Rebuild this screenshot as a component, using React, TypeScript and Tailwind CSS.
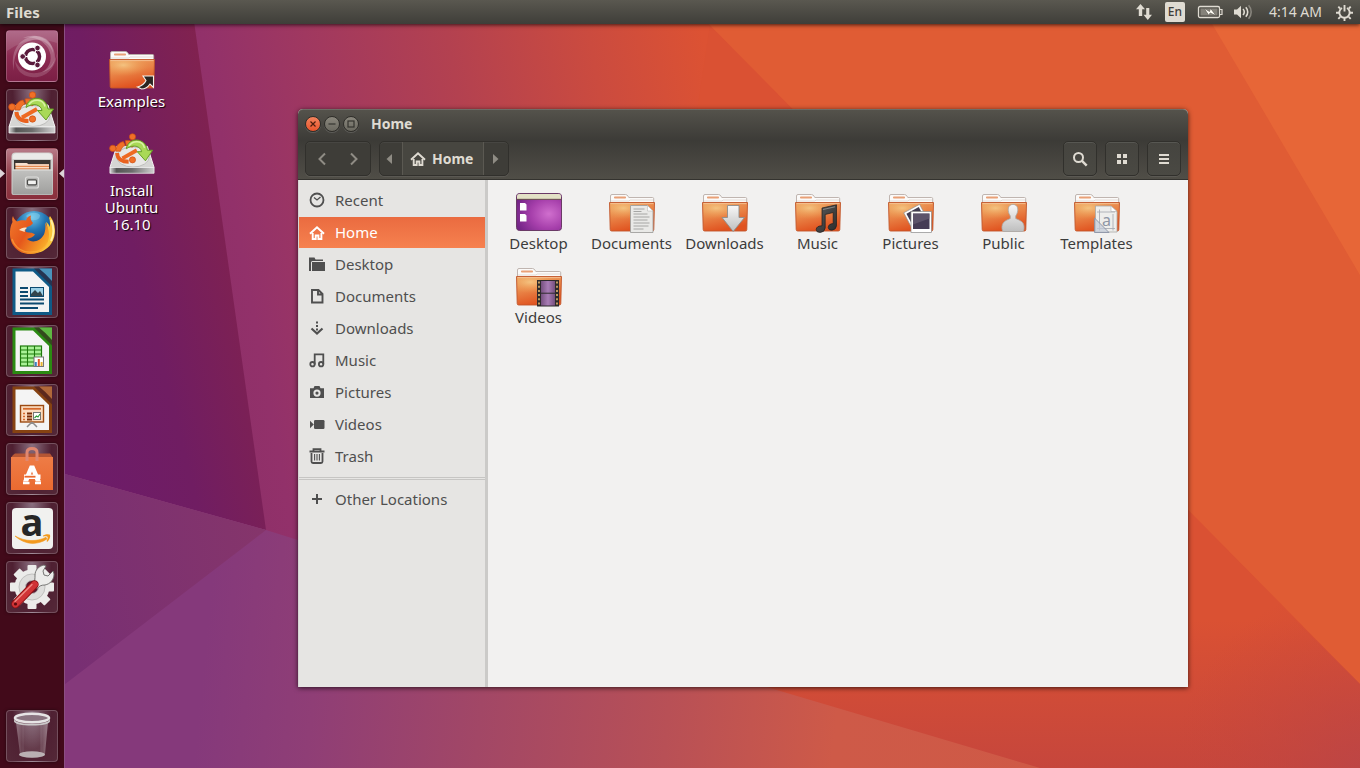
import React from "react";

/* Shared gradients and wallpaper ------------------------------------------------ */

function Wallpaper() {
  return (
    <svg
      className="absolute inset-0 h-full w-full"
      viewBox="0 0 1360 768"
      preserveAspectRatio="none"
      aria-hidden="true"
    >
      <defs>
        <linearGradient id="sky" gradientUnits="userSpaceOnUse" x1="150" y1="120" x2="700" y2="20">
          <stop offset="0" stopColor="#8c2f68" />
          <stop offset="0.12" stopColor="#92316a" />
          <stop offset="0.3" stopColor="#a03860" />
          <stop offset="0.55" stopColor="#b34150" />
          <stop offset="0.8" stopColor="#cb4b3f" />
          <stop offset="1" stopColor="#dc5233" />
        </linearGradient>
        <linearGradient id="skyDark" gradientUnits="userSpaceOnUse" x1="65" y1="360" x2="266" y2="310">
          <stop offset="0" stopColor="#6d1c69" />
          <stop offset="0.45" stopColor="#701d62" />
          <stop offset="1" stopColor="#81224f" />
        </linearGradient>
        <linearGradient id="ground" gradientUnits="userSpaceOnUse" x1="200" y1="700" x2="1130" y2="790">
          <stop offset="0" stopColor="#85397b" />
          <stop offset="0.12" stopColor="#8f3e76" />
          <stop offset="0.3" stopColor="#a24766" />
          <stop offset="0.5" stopColor="#b85056" />
          <stop offset="0.68" stopColor="#ce5a48" />
          <stop offset="1" stopColor="#cf5945" />
        </linearGradient>
        <linearGradient id="groundLeft" gradientUnits="userSpaceOnUse" x1="65" y1="600" x2="266" y2="560">
          <stop offset="0" stopColor="#782f73" />
          <stop offset="1" stopColor="#85356b" />
        </linearGradient>
        <linearGradient id="dusk" x1="0" y1="0" x2="0" y2="1">
          <stop offset="0" stopColor="#c6463c" stopOpacity="0" />
          <stop offset="1" stopColor="#c6463c" />
        </linearGradient>
        <radialGradient id="duskCorner" gradientUnits="userSpaceOnUse" cx="1370" cy="780" r="200">
          <stop offset="0" stopColor="#bb4547" stopOpacity="0.9" />
          <stop offset="1" stopColor="#c6463c" stopOpacity="0" />
        </radialGradient>
        <linearGradient id="folderFront" x1="0" y1="0" x2="0.35" y2="1">
          <stop offset="0" stopColor="#eda361" />
          <stop offset="0.5" stopColor="#e98447" />
          <stop offset="1" stopColor="#e0521f" />
        </linearGradient>
        <radialGradient id="folderGlow" cx="0.3" cy="0.25" r="0.6">
          <stop offset="0" stopColor="#f6cf8c" stopOpacity="0.8" />
          <stop offset="1" stopColor="#f0a050" stopOpacity="0" />
        </radialGradient>
        <radialGradient id="desk" cx="0.72" cy="0.55" r="0.8">
          <stop offset="0" stopColor="#d06fce" />
          <stop offset="0.5" stopColor="#a63fab" />
          <stop offset="1" stopColor="#6f2283" />
        </radialGradient>
        <linearGradient id="silver" x1="0" y1="0" x2="0" y2="1">
          <stop offset="0" stopColor="#f8f8f8" />
          <stop offset="1" stopColor="#bebebe" />
        </linearGradient>
        <linearGradient id="cabinet" x1="0" y1="0" x2="0" y2="1">
          <stop offset="0" stopColor="#c2c2c0" />
          <stop offset="1" stopColor="#9f9f9d" />
        </linearGradient>
        <linearGradient id="ink" x1="0" y1="0" x2="1" y2="1">
          <stop offset="0" stopColor="#5a5a5a" />
          <stop offset="1" stopColor="#2c2c2c" />
        </linearGradient>
        <linearGradient id="edge" x1="0" y1="0" x2="1" y2="0">
          <stop offset="0" stopColor="#d8d8d8" />
          <stop offset="0.15" stopColor="#555555" />
          <stop offset="0.5" stopColor="#6c6c6c" />
          <stop offset="1" stopColor="#d0d0d0" />
        </linearGradient>
        <linearGradient id="film" x1="0" y1="0" x2="1" y2="0">
          <stop offset="0" stopColor="#76507f" />
          <stop offset="0.5" stopColor="#a97db6" />
          <stop offset="1" stopColor="#76507f" />
        </linearGradient>
        <radialGradient id="globe" cx="0.45" cy="0.15" r="0.8">
          <stop offset="0" stopColor="#6cc4ea" />
          <stop offset="0.4" stopColor="#2377b4" />
          <stop offset="0.8" stopColor="#143f7c" />
        </radialGradient>
        <linearGradient id="fox" x1="0" y1="0" x2="1" y2="0.6">
          <stop offset="0" stopColor="#f07a2c" />
          <stop offset="0.5" stopColor="#e5571c" />
          <stop offset="1" stopColor="#f7a928" />
        </linearGradient>
        <linearGradient id="cup" x1="0" y1="0" x2="1" y2="0">
          <stop offset="0" stopColor="#ffffff" stopOpacity="0.35" />
          <stop offset="0.2" stopColor="#ffffff" stopOpacity="0.12" />
          <stop offset="0.75" stopColor="#ffffff" stopOpacity="0.12" />
          <stop offset="1" stopColor="#ffffff" stopOpacity="0.4" />
        </linearGradient>
        <linearGradient id="tote" x1="0" y1="0" x2="0" y2="1">
          <stop offset="0" stopColor="#ee7c46" />
          <stop offset="1" stopColor="#ea6a30" />
        </linearGradient>
      </defs>
      <rect width="1360" height="768" fill="url(#sky)" />
      <path d="M710 24 600 768H1360V24Z" fill="#da5133" />
      <path d="M685 0 1360 684V0Z" fill="#e05c34" />
      <path d="M1198 0 1360 275V0Z" fill="#e76637" />
      <path d="M680 620H1296L1360 684V768H680Z" fill="url(#dusk)" />
      <path d="M1100 560H1236L1360 684V768H1100Z" fill="url(#duskCorner)" />
      <path d="M0 0H191L266 530 0 456Z" fill="url(#skyDark)" />
      <path d="M0 456 266 530 770 688 1040 768H0Z" fill="url(#ground)" />
      <path d="M0 456 266 530 0 734Z" fill="url(#groundLeft)" />
    </svg>
  );
}

/* Top panel --------------------------------------------------------------------- */

function TopPanel() {
  return (
    <header className="relative z-20 flex h-6 items-center justify-between bg-linear-to-b from-[#5a5850] to-[#3f3e39] pr-[7px] pl-1.5 text-[#dfdbd2] shadow-[0_1px_4px_rgba(0,0,0,0.7)]">
      <span className="text-[15px] leading-[22px] font-bold">Files</span>
      <div className="flex items-center">
        <button type="button" aria-label="Network" className="mr-3">
          <svg width="18" height="18" viewBox="0 0 18 18" className="block" fill="#dfdbd2">
            <path d="M5.500 1 10 6.200H7.200V13H3.800V6.200H1Z" />
            <path d="M12.800 17 17 11.800H14.300V5H11.200V11.800H8.500Z" />
          </svg>
        </button>
        <button
          type="button"
          className="mr-3 h-5 w-5 rounded-[2px] bg-[#dfdbd2] text-center text-xs leading-5 font-medium text-[#3f3e39]"
        >
          En
        </button>
        <button type="button" aria-label="Battery" className="mr-2.5">
          <svg width="26" height="16" viewBox="0 0 26 16" className="block">
            <rect x="1.500" y="2.500" width="21" height="11" rx="1.500" fill="none" stroke="#dfdbd2" strokeWidth="1.300" />
            <rect x="3.500" y="4.500" width="17" height="7" fill="#85827a" />
            <path d="M23 5.500h2v5h-2" fill="none" stroke="#dfdbd2" strokeWidth="1.200" />
            <path d="M7 4.300 12.500 7.500 13.600 4.400 19 11.600 13 8.900 12 11.600Z" fill="#fffdf5" stroke="#55534c" strokeWidth="0.600" />
          </svg>
        </button>
        <button type="button" aria-label="Sound" className="mr-4">
          <svg width="20" height="16" viewBox="0 0 20 16" className="block">
            <path d="M1 5.500h3l4-3.800v12.600l-4-3.800H1Z" fill="#dfdbd2" />
            <path d="M10 5a4.200 4.200 0 0 1 0 6" fill="none" stroke="#dfdbd2" strokeWidth="1.600" />
            <path d="M12.800 3.200a7 7 0 0 1 0 9.600" fill="none" stroke="#dfdbd2" strokeWidth="1.600" />
            <path d="M15.600 1.300a10 10 0 0 1 0 13.400" fill="none" stroke="#89867e" strokeWidth="1.600" />
          </svg>
        </button>
        <button type="button" className="mr-3.5 text-sm leading-[22px]">
          4:14 AM
        </button>
        <button type="button" aria-label="Session">
          <svg width="17" height="17" viewBox="0 0 17 17" className="block" fill="none" stroke="#dfdbd2">
            <path d="M6 4A5.200 5.200 0 1 0 11 4" strokeWidth="1.900" />
            <path d="M8.500 1v6.500" strokeWidth="1.900" />
            <path
              d="M0 8.700h3M14 8.700h3M8.500 14v3M2.300 2.700l1.800 1.800M14.700 2.700l-1.800 1.800M2.300 14.900l2-2M14.700 14.900l-2-2"
              strokeWidth="1.900"
            />
          </svg>
        </button>
      </div>
    </header>
  );
}

/* Launcher artwork -------------------------------------------------------------- */

function UbuntuArt() {
  return (
    <svg width="50" height="50" viewBox="0 0 50 50" className="block">
      <g fill="#ffffff">
        <path d="M7 40C3 22 10 8 27 5c11-1 19 6 19 17C43 12 35 8 26 9 12 12 6 24 7 40Z" fillOpacity="0.22" />
        <path d="M16 7C32 0 49 11 48 28c-1 7-6 12-13 13C44 36 46 26 41 17 35 8 26 5 16 7Z" fillOpacity="0.24" />
        <path d="M50 22C49 38 38 48 24 46 14 45 9 38 8 30c5 9 13 13 22 12 10-1 17-8 20-20Z" fillOpacity="0.16" />
        <path d="M0 2Q0 0 2 0H48q2 0 2 2V12Q25 2 0 20Z" fillOpacity="0.12" />
      </g>
      <circle cx="25" cy="25.500" r="14" fill="#ffffff" />
      <circle cx="25.500" cy="25.500" r="7" fill="none" stroke="#5a1a3c" strokeWidth="3.600" />
      <path
        d="M25.500 25.500H14M25.500 25.500l5.700-10M25.500 25.500l5.700 10"
        stroke="#ffffff"
        strokeWidth="1.200"
      />
      <circle cx="25.500" cy="25.500" r="5" fill="#ffffff" />
      <g fill="#5a1a3c" stroke="#ffffff" strokeWidth="0.900">
        <circle cx="15.700" cy="25.500" r="2.800" />
        <circle cx="30.500" cy="17" r="2.800" />
        <circle cx="30.500" cy="34" r="2.800" />
      </g>
    </svg>
  );
}

function InstallArt({ size = 50 }: { size?: number }) {
  return (
    <svg width={size} height={size} viewBox="0 0 50 50" className="block">
      <path d="M9 15 41 15 48 37H2Z" fill="#d6d6d4" stroke="#f6f6f6" />
      <ellipse cx="26" cy="26" rx="17" ry="10.500" fill="#e8e8e6" stroke="#bdbdbb" />
      <path d="M2 37h46v6H2Z" fill="url(#edge)" stroke="#eeeeee" strokeWidth="0.800" />
      <path d="M9.500 22c0 6 5 9 12 9" stroke="#e9621f" strokeWidth="4" fill="none" />
      <path d="M8 20c0-5 3-9 8-10l2 4c-3 1-4 3-5 6Z" fill="#f07027" stroke="#cc4d12" strokeWidth="0.700" />
      <path d="M18 9c5-1 9 1 11 4l-4 3c-2-2-4-2-6-2Z" fill="#f07027" stroke="#cc4d12" strokeWidth="0.700" />
      <path d="M15 27.500 30 19" stroke="#ee6a22" strokeWidth="4" />
      <g fill="#f07027" stroke="#cc4d12" strokeWidth="0.700">
        <circle cx="5" cy="17" r="3.300" />
        <circle cx="25.500" cy="5" r="3.200" />
        <circle cx="25.500" cy="29" r="3.200" />
      </g>
      <path
        d="M19 17.500C21 5 39 5 41 19h5.500L39 30 30.500 20.500H35c-1-6-9-8-16-3Z"
        fill="#a9d957"
        stroke="#629b22"
        strokeWidth="1"
      />
      <path d="M22 14.500c4-6 14-6 16 2" stroke="#d9f3a4" strokeWidth="1.500" fill="none" />
    </svg>
  );
}

function FilesArt() {
  return (
    <svg width="50" height="50" viewBox="0 0 50 50" className="block">
      <path d="M4.500 7.500q0-4 4-4H42q4 0 4 4V44q0 2-2 2H6.500q-2 0-2-2Z" fill="#cfcfcd" />
      <path d="M5.500 7q1-2.800 4-2.800h31.500q3 0 4 2.800V10H5.500Z" fill="#eaeae8" />
      <path d="M7 11h36.500v10H7Z" fill="#3a3633" />
      <path d="M8.500 14h11l2 1.200h20.500V21H8.500Z" fill="#e28a52" />
      <path d="M8.500 14h11l2 1.200h20.500v1.500H8.500Z" fill="#f7e1cf" />
      <path d="M8.500 18.600h33.500" stroke="#fbdcc2" strokeWidth="1.200" />
      <path d="M5.500 20.500h40V44q0 1.500-1.500 1.500H7q-1.500 0-1.500-1.500Z" fill="url(#cabinet)" />
      <path d="M5.500 21h40" stroke="#e2e2e0" />
      <rect x="18.500" y="28" width="13" height="11" rx="2" fill="#b4b4b2" stroke="#dededc" strokeWidth="1.200" />
      <rect x="20.500" y="30.800" width="9" height="5" rx="1" fill="#f2f2f0" stroke="#4a4a48" strokeWidth="1.200" />
    </svg>
  );
}

function FirefoxArt() {
  return (
    <svg width="50" height="50" viewBox="0 0 50 50" className="block">
      <circle cx="27" cy="23.500" r="20.500" fill="url(#globe)" />
      <path d="M19 8c4-4 11-4 14-1 0 3-2 5-6 5-3 1-6-2-8-4Z" fill="#8ed6f2" fillOpacity="0.45" />
      <path
        d="M43 8c6 7 7 20 1 28-5 7-13 10-20 9-3 0-5-1-7-2 10 1 18-4 21-11 3-6 3-13 1-18 2 1 3 3 4 5 0-4 0-7-1-9Z"
        fill="#f9c43a"
      />
      <path
        d="M6 8c1 3 2 4 4 5.500 3-1.500 6-1.500 9-1 1-3 2-4 5-5-1 3 0 5 2 7.500-1 2-3 3-6 4-2 2-2 4-1 5 3 1 6 0 9 2.500-2 3-5 3.500-8 4.500 5 4.500 13 2.500 17-4.500 1-3 2-7 1-12 4 6 5 12 3 19-3 8-10 12.500-17 12.500C11 46.500 3 37 3 26c0-6 1-9 2.500-12C5 12 5 10 6 8Z"
        fill="url(#fox)"
      />
      <path d="M12 22c2-2 6-3 8-2-2 1-3 3-2 4Z" fill="#fbe3c4" />
      <path d="M5 31c3 9 11 14 20 13 7 0 13-4 16-10" fill="none" stroke="#ffb13d" strokeWidth="1.400" strokeOpacity="0.6" />
      <path d="M44 12c3 7 3 15 0 21" fill="none" stroke="#fff0a0" strokeWidth="2" />
    </svg>
  );
}

function OfficeArt({
  body,
  corner,
  children,
}: {
  body: string;
  corner: string;
  children: React.ReactNode;
}) {
  return (
    <svg width="50" height="50" viewBox="0 0 50 50" className="block">
      <path d="M5.500 1.500H45V48H5.500Z" fill={body} />
      <path d="M27 1.500H45V19.500Z" fill="#3a1626" fillOpacity="0.55" />
      <path d="M32 1.500H45V14Q39 7 32 1.500Z" fill={corner} />
      <path d="M8.500 4.500h17.500l16 15.500v25H8.500Z" fill="#f4f4f4" />
      {children}
    </svg>
  );
}

function WriterArt() {
  return (
    <OfficeArt body="#0f5a86" corner="#4a93bb">
      <path
        d="M13 21h8M13 25h8M13 29h8M13 32.500h24M13 36.500h24M13 41h18"
        stroke="#0c4a70"
        strokeWidth="2"
      />
      <rect x="23.500" y="20.500" width="13" height="9" fill="#9cd0e6" stroke="#0c4a70" />
      <path d="M24 29v-2l4-4 3 3 2-2 3 5Z" fill="#33444c" />
    </OfficeArt>
  );
}

function CalcArt() {
  return (
    <OfficeArt body="#2b8a12" corner="#5fb843">
      <rect x="13.500" y="20" width="21" height="20" fill="#a9f296" stroke="#1e7a0c" strokeWidth="1.200" />
      <path
        d="M13 24h22M13 28h22M13 32h22M13 36h22M20.500 20v20M27.500 20v20"
        stroke="#1e7a0c"
        strokeWidth="1.100"
      />
      <rect x="27" y="31" width="9.500" height="9.500" fill="#ffffff" stroke="#777777" />
      <path d="M28.800 36v4" stroke="#3c82c4" strokeWidth="2" />
      <path d="M31.800 33v7" stroke="#e2562a" strokeWidth="2" />
      <path d="M34.600 36v4" stroke="#e8b32f" strokeWidth="2" />
    </OfficeArt>
  );
}

function ImpressArt() {
  return (
    <OfficeArt body="#864212" corner="#b0683a">
      <rect x="13.500" y="20.500" width="23" height="16.500" fill="#fbdcc0" stroke="#9c4a12" strokeWidth="1.400" />
      <path d="M16 23.800h18" stroke="#d5692b" strokeWidth="1.800" />
      <path d="M16 28.500h2M16 31.500h2M16 34.500h2" stroke="#d5692b" strokeWidth="1.600" />
      <path d="M20 28.500h5M20 31.500h5M20 34.500h5" stroke="#7a2f08" strokeWidth="1.800" />
      <rect x="26.500" y="27.500" width="7" height="7" fill="#ffffff" stroke="#777777" />
      <path d="m27.500 33 2-2 1.500 1 2-3" stroke="#2d9b38" strokeWidth="1.100" fill="none" />
      <path d="M25 37v2M20 42l4-4h2l4 4" stroke="#8c8c8c" strokeWidth="1.500" fill="none" />
    </OfficeArt>
  );
}

function SoftwareArt() {
  return (
    <svg width="50" height="50" viewBox="0 0 50 50" className="block">
      <path d="M6 11 8 9.500H43l2.500 3.500h-41Z" fill="#b55634" />
      <path d="M4 13h42v33H4Z" fill="url(#tote)" />
      <path d="M20 17V8.500q0-4 5-4t5 4V17" fill="none" stroke="#df8770" strokeWidth="3" />
      <path d="M22.800 21.500h4.400L34 37.500h-5.200L25 27.500l-3.800 10H16Z" fill="#ffffff" />
      <path d="M17 30.500h16.500v4.500H17Z" fill="#ffffff" />
      <path d="M17.500 32.700h11" stroke="#ea6a30" strokeWidth="1.800" />
      <path d="M16 39h6.500M28 39h6" stroke="#ffffff" strokeWidth="2.400" />
    </svg>
  );
}

function AmazonArt() {
  return (
    <svg width="50" height="50" viewBox="0 0 50 50" className="block overflow-visible">
      <rect x="5" y="5" width="41" height="41" rx="4" fill="#f1f1ef" />
      <text
        x="25"
        y="33"
        textAnchor="middle"
        fontFamily="Open Sans, sans-serif"
        fontWeight="700"
        fontSize="38"
        fill="#262626"
      >
        a
      </text>
      <path d="M8 33c10 9 22 9.500 32 3l-1-1.700c-9 4.500-21 4.500-31-1.300Z" fill="#f39a1e" stroke="#f39a1e" strokeWidth="0.600" />
      <path d="M36 32.500c3-1.500 6-1.500 7-.7.600 2-.4 5-2.500 7l-1-.6c1-2 1.500-3.700 1-4.400-1-.6-2.500-.6-4.500-.3Z" fill="#f39a1e" />
    </svg>
  );
}

function SettingsArt() {
  return (
    <svg width="50" height="50" viewBox="0 0 50 50" className="block">
      <g transform="translate(25 25)">
        <g fill="#ececea">
          <rect x="-4.500" y="-22" width="9" height="44" rx="1" />
          <rect x="-4.500" y="-22" width="9" height="44" rx="1" transform="rotate(45)" />
          <rect x="-4.500" y="-22" width="9" height="44" rx="1" transform="rotate(90)" />
          <rect x="-4.500" y="-22" width="9" height="44" rx="1" transform="rotate(135)" />
          <circle r="17.500" />
        </g>
        <circle r="13" fill="#dededc" stroke="#c0c0be" />
        <circle r="6.500" fill="#581a30" stroke="#bcbcba" />
      </g>
      <path
        d="M26 23c2-4 2-6 2-10 0-5 4-9 9-10l2 1-3 5 1 4 4 1 5-5 1 3c0 6-4 10-9 11-4 0-6 1-8 4Z"
        fill="#ececea"
        stroke="#6a6a68"
        strokeWidth="0.900"
      />
      <path d="M27.500 22.500 8.500 42" stroke="#8d1013" strokeWidth="8.400" strokeLinecap="round" />
      <path d="M27.500 22.500 8.500 42" stroke="#d03336" strokeWidth="6.800" strokeLinecap="round" />
      <path d="M25 22.500 8 39.500" stroke="#f08a84" strokeWidth="1.400" strokeLinecap="round" />
      <circle cx="8.500" cy="42" r="1.600" fill="#5c0a0d" />
    </svg>
  );
}

function TrashArt() {
  return (
    <svg width="50" height="50" viewBox="0 0 50 50" className="block">
      <path d="M9 11h32l-3 32q-1 4-13 4t-12-4Z" fill="url(#cup)" />
      <ellipse cx="25" cy="43.500" rx="13" ry="3.200" fill="#c9c4c6" fillOpacity="0.85" />
      <path d="M16 14v28M34 14v28" stroke="#ffffff" strokeOpacity="0.1" />
      <ellipse cx="25" cy="7" rx="17" ry="4.200" fill="#8a7480" stroke="#e6e4e5" strokeWidth="2.600" />
      <path d="M7 8q2 5 18 5t18-5v2.500q-2 4-18 4T7 10.500Z" fill="#cbc8c9" />
    </svg>
  );
}

type LauncherEntry = {
  name: string;
  tile: string;
  art: React.ReactNode;
  running?: boolean;
};

const darkTile =
  "bg-[radial-gradient(ellipse_at_50%_0%,#8a7080_0%,#4f2032_55%,#542838_100%)]";

const launcher: LauncherEntry[] = [
  { name: "Search your computer", tile: "bg-linear-to-b from-[#a5577a] via-[#8d2b52] to-[#7b1f45]", art: <UbuntuArt /> },
  { name: "Install Ubuntu", tile: darkTile, art: <InstallArt /> },
  { name: "Files", tile: "bg-linear-to-b from-[#b77a88] via-[#93404c] to-[#8a2f3c]", art: <FilesArt />, running: true },
  { name: "Firefox", tile: darkTile, art: <FirefoxArt /> },
  { name: "Writer", tile: darkTile, art: <WriterArt /> },
  { name: "Calc", tile: darkTile, art: <CalcArt /> },
  { name: "Impress", tile: darkTile, art: <ImpressArt /> },
  { name: "Ubuntu Software", tile: darkTile, art: <SoftwareArt /> },
  { name: "Amazon", tile: darkTile, art: <AmazonArt /> },
  { name: "System Settings", tile: darkTile, art: <SettingsArt /> },
];

function LauncherButton({ entry }: { entry: LauncherEntry }) {
  return (
    <div className="relative px-1.5">
      <button
        type="button"
        aria-label={entry.name}
        className={`block h-[52px] w-[52px] rounded border border-white/20 shadow-[0_0_3px_rgba(0,0,0,0.5)] ${entry.tile}`}
      >
        {entry.art}
      </button>
      {entry.running && (
        <>
          <svg className="absolute top-5 left-0" width="5" height="11" viewBox="0 0 5 11" aria-hidden="true">
            <path d="M0 1 5 5.500 0 10Z" fill="#dcd5d8" />
          </svg>
          <svg className="absolute top-5 right-0" width="5" height="11" viewBox="0 0 5 11" aria-hidden="true">
            <path d="M5 1 0 5.500 5 10Z" fill="#dcd5d8" />
          </svg>
        </>
      )}
    </div>
  );
}

function Launcher() {
  return (
    <nav
      aria-label="Launcher"
      className="z-10 flex w-[65px] shrink-0 flex-col gap-[7px] border-r border-[#8b4f82] bg-[#420a1a] py-1.5"
    >
      {launcher.map((entry) => (
        <LauncherButton key={entry.name} entry={entry} />
      ))}
      <div className="mt-auto">
        <LauncherButton entry={{ name: "Trash", tile: darkTile, art: <TrashArt /> }} />
      </div>
    </nav>
  );
}

/* Folder icons ------------------------------------------------------------------ */

function Folder({ children }: { children?: React.ReactNode }) {
  return (
    <svg width="48" height="41" viewBox="0 0 48 41" className="block" aria-hidden="true">
      <path d="M2.500 12V4q0-1.500 1.500-1.500H17.500q1.500 0 2.500 1.700l.8 1.300H44.500q1.200 0 1.200 1.200V12Z" fill="#fbfaf9" stroke="#b9aea8" strokeWidth="0.900" />
      <rect x="6" y="4.500" width="12" height="2" rx="0.800" fill="#e9a077" />
      <path d="M3 9h18l1-1h23" stroke="#e4dcd6" fill="none" />
      <path d="M1.500 10.500h45l-.7 27q0 1.500-1.500 1.500H3.700q-1.500 0-1.500-1.500Z" fill="url(#folderFront)" stroke="#c1562a" strokeWidth="0.900" />
      <path d="M2.500 11.500h43l-.5 17Q24 24 2.800 30Z" fill="url(#folderGlow)" />
      <path d="M2.500 11.600h43" stroke="#f6c79b" strokeOpacity="0.8" />
      {children}
    </svg>
  );
}

function DesktopArt() {
  return (
    <svg width="48" height="41" viewBox="0 0 48 41" className="block" aria-hidden="true">
      <rect x="1.500" y="1.500" width="45" height="37" rx="3" fill="url(#desk)" stroke="#6a3a66" />
      <path d="M2 7V4q0-2 2-2h40q2 0 2 2v3Z" fill="#e3e1c6" />
      <path d="M2 7.300h44" stroke="#5f5740" strokeWidth="0.900" />
      <path d="M5 11h5l1.500 1.500v6H5ZM5 22h5l1.500 1.500v6H5Z" fill="#ffffff" />
    </svg>
  );
}

const folders = [
  { name: "Desktop", art: <DesktopArt /> },
  {
    name: "Documents",
    art: (
      <Folder>
        <path d="M22.500 13.500h17l5.500 5.500v21.500h-22.500Z" fill="#e9e9e7" stroke="#a0a09e" strokeWidth="0.900" />
        <path d="M39.500 13.500V19H45Z" fill="#ffffff" stroke="#b8b8b6" strokeWidth="0.600" />
        <path d="M25.500 17h11M25.500 19.500h8M25.500 22h14M25.500 25h16M25.500 28h14M25.500 31h16M25.500 34h15M25.500 37h10" stroke="#9e9e9c" strokeWidth="0.900" />
      </Folder>
    ),
  },
  {
    name: "Downloads",
    art: (
      <Folder>
        <path d="M26.500 13.500h11.500v12h5.500L32.200 39.500 21 25.500h5.500Z" fill="url(#silver)" stroke="#8d8d8b" strokeWidth="0.900" />
      </Folder>
    ),
  },
  {
    name: "Music",
    art: (
      <Folder>
        <path
          d="M28 16 42.500 12.800v21q-.4 4-4.500 4.400-3.800 0-3.800-2.800.3-3.500 5-3.800V20.500l-8 2V36q-.6 4.200-5 4.500-4 0-4-3 .3-3.600 5.800-3.700Z"
          fill="url(#ink)"
          stroke="#1e1e1e"
          strokeWidth="0.700"
        />
        <path d="m29 17.500 12-2.700" stroke="#8f8f8f" strokeWidth="0.900" />
      </Folder>
    ),
  },
  {
    name: "Pictures",
    art: (
      <Folder>
        <g transform="rotate(-28 28 25)">
          <rect x="20" y="16" width="18" height="18" fill="#ffffff" stroke="#8a8a8a" strokeWidth="0.600" />
          <rect x="22" y="18" width="14" height="13" fill="#413c50" />
        </g>
        <rect x="24" y="19.500" width="20.500" height="21" fill="#ffffff" stroke="#8a8a8a" strokeWidth="0.700" />
        <rect x="26" y="21.500" width="16.500" height="15.500" fill="#453c55" />
        <path d="M26 21.500h16.500v5L26 32.500Z" fill="#6c6378" fillOpacity="0.600" />
      </Folder>
    ),
  },
  {
    name: "Public",
    art: (
      <Folder>
        <path
          d="M33 12.500c3.500 0 5 2.500 4.700 6-.2 2.500-1.200 4-2 5.500v2.500c3 1.500 7.800 2.500 8.300 7.500.2 3 0 5.500-1.500 5.500H23.800c-1.500 0-2-2.500-1.800-5 .5-5.500 5.500-6.500 8.300-8V24c-.8-1.500-1.800-3-2-5.500-.3-3.500 1.200-6 4.700-6Z"
          fill="url(#silver)"
          stroke="#a9a9a7"
          strokeWidth="0.800"
        />
      </Folder>
    ),
  },
  {
    name: "Templates",
    art: (
      <Folder>
        <path d="M22.500 14h15.500l6 5.500V40H22.500Z" fill="#eeeeec" stroke="#a8a8a6" strokeWidth="0.800" />
        <path d="M38 14v5.500h6Z" fill="#ffffff" stroke="#b0b0ae" strokeWidth="0.600" />
        <path d="M24 20h18M24 36.500h18M26.500 17.500v21M40 22v16.500" stroke="#a9adb6" strokeWidth="0.900" />
        <text x="33.500" y="33.500" textAnchor="middle" fontFamily="Noto Sans, sans-serif" fontSize="16" fill="#8f97a6">
          a
        </text>
        <path d="M21.500 26v14.500H36Z" fill="#c3cad8" fillOpacity="0.700" stroke="#8b93a5" strokeWidth="0.900" />
      </Folder>
    ),
  },
  {
    name: "Videos",
    art: (
      <Folder>
        <rect x="22" y="14" width="22" height="26.500" fill="#2d2a2b" />
        <rect x="26" y="15" width="14" height="11.700" fill="url(#film)" />
        <rect x="26" y="27.700" width="14" height="11.800" fill="url(#film)" />
        <path d="M24 15.500v24M42 15.500v24" stroke="#d6b06e" strokeWidth="1.700" strokeDasharray="2 2.200" />
      </Folder>
    ),
  },
];

/* Sidebar icons ----------------------------------------------------------------- */

const homeIcon = (
  <>
    <path d="M1 8.800 8 2.300l7 6.500" fill="none" stroke="currentColor" strokeWidth="2" />
    <path d="M3.700 8v6h3V10.500h2.700V14h3V8" fill="none" stroke="currentColor" strokeWidth="1.900" />
  </>
);

const places = [
  {
    name: "Recent",
    icon: (
      <>
        <circle cx="8" cy="8" r="6.500" fill="none" stroke="currentColor" strokeWidth="1.800" />
        <path d="M5 5.500 8 8l3.500-3" fill="none" stroke="currentColor" strokeWidth="1.300" />
      </>
    ),
  },
  { name: "Home", icon: homeIcon },
  {
    name: "Desktop",
    icon: (
      <>
        <path d="M0 1.500H5.500l1 2H14V5H3.500Q2 5 2 6.500V15H0Z" fill="currentColor" />
        <path d="M3 6h13v9H3Z" fill="currentColor" />
      </>
    ),
  },
  {
    name: "Documents",
    icon: <path d="M3 2h6.500l4 4v8.500H3ZM9 2v4.500h4.500" fill="none" stroke="currentColor" strokeWidth="1.900" />,
  },
  {
    name: "Downloads",
    icon: (
      <>
        <path d="M8 1.500v9" stroke="currentColor" strokeWidth="2" strokeDasharray="2 1.500" />
        <path d="m2.500 8.500 5.500 5 5.500-5" fill="none" stroke="currentColor" strokeWidth="2.200" />
      </>
    ),
  },
  {
    name: "Music",
    icon: (
      <>
        <path d="M5.700 12.500V2.300h8.600v10" fill="none" stroke="currentColor" strokeWidth="1.800" />
        <circle cx="3.500" cy="12.200" r="2.200" fill="none" stroke="currentColor" strokeWidth="1.800" />
        <circle cx="12.100" cy="12.200" r="2.200" fill="none" stroke="currentColor" strokeWidth="1.800" />
      </>
    ),
  },
  {
    name: "Pictures",
    icon: (
      <path
        d="M1 4.200h3.500L5.500 2h5l1 2.200H15V14H1ZM8 5.500a3.600 3.600 0 1 0 0 7.200 3.600 3.600 0 0 0 0-7.200Zm0 2a1.600 1.600 0 1 1 0 3.200 1.600 1.600 0 0 1 0-3.200Z"
        fill="currentColor"
        fillRule="evenodd"
      />
    ),
  },
  {
    name: "Videos",
    icon: (
      <>
        <rect x="5" y="4" width="10.500" height="9" rx="1.200" fill="currentColor" />
        <path d="M1 4.800 4.800 8.500 1 12.200Z" fill="currentColor" />
      </>
    ),
  },
  {
    name: "Trash",
    icon: (
      <>
        <path d="M.5 3.500h15M4.500 3V1.200h7V3" fill="none" stroke="currentColor" strokeWidth="1.800" />
        <path d="M2.500 5v8.500q0 1.500 1.500 1.500h8q1.500 0 1.500-1.500V5" fill="none" stroke="currentColor" strokeWidth="1.800" />
        <path d="M5.600 6v6.500M8 6v6.500M10.400 6v6.500" stroke="currentColor" strokeWidth="1.100" />
      </>
    ),
  },
];

function Place({ name, icon, active = false }: { name: string; icon: React.ReactNode; active?: boolean }) {
  return (
    <li>
      <a
        href="#"
        aria-current={active ? "page" : undefined}
        className={
          active
            ? "flex h-8 items-center gap-2.5 border-b border-[#e6e5e3] bg-linear-to-b from-[#ea6b40] to-[#f6814f] pl-2.5 text-white"
            : "flex h-8 items-center gap-2.5 pb-0.5 pl-2.5"
        }
      >
        <svg width="16" height="16" viewBox="0 0 16 16" aria-hidden="true">
          {icon}
        </svg>
        {name}
      </a>
    </li>
  );
}

/* Window ------------------------------------------------------------------------ */

const windowButton =
  "flex h-4 w-4 items-center justify-center rounded-full border border-[#2f2e2a] shadow-[0_1px_0_rgba(255,255,255,0.15)]";

const toolButton =
  "flex h-[35px] items-center justify-center rounded-[5px] border border-[#31302c] bg-linear-to-b from-[#45443f] to-[#4a4943] shadow-[inset_0_1px_0_rgba(255,255,255,0.1),0_1px_0_rgba(255,255,255,0.07)]";

const toolGroup =
  "flex h-[35px] items-stretch overflow-hidden rounded-[5px] border border-[#31302c] bg-[#3e3d38] shadow-[inset_0_1px_0_rgba(255,255,255,0.05),0_1px_0_rgba(255,255,255,0.07)]";

function WindowHeader() {
  return (
    <div className="shrink-0 rounded-t-[5px] border-b border-[#34332f] bg-linear-to-b from-[#55534c] via-[#3c3b37] via-45% to-[#504e47] text-[#dfdbd2] shadow-[inset_0_1px_0_rgba(255,255,255,0.15)]">
      <div className="flex h-[30px] items-center gap-[3px] pl-[7px]">
        <button type="button" aria-label="Close" className={`${windowButton} bg-linear-to-b from-[#f2825c] to-[#e9542a]`}>
          <svg width="14" height="14" viewBox="0 0 14 14">
            <path d="m4.500 4.500 5 5M9.500 4.500l-5 5" stroke="#4c1d0d" strokeWidth="1.200" />
          </svg>
        </button>
        <button type="button" aria-label="Minimize" className={`${windowButton} bg-linear-to-b from-[#8a877d] to-[#6b6960]`}>
          <svg width="14" height="14" viewBox="0 0 14 14">
            <path d="M3.500 7h7" stroke="#35342f" strokeWidth="1.200" />
          </svg>
        </button>
        <button type="button" aria-label="Maximize" className={`${windowButton} bg-linear-to-b from-[#8a877d] to-[#6b6960]`}>
          <svg width="14" height="14" viewBox="0 0 14 14">
            <rect x="4" y="4" width="6" height="6" fill="none" stroke="#35342f" strokeWidth="1.200" />
          </svg>
        </button>
        <h1 className="ml-[9px] text-sm leading-5 font-bold">Home</h1>
      </div>
      <div className="flex h-10 items-start gap-2 px-[7px] pt-0.5">
        <div className={`${toolGroup} w-[66px]`}>
          <button type="button" aria-label="Back" className="flex flex-1 items-center justify-center">
            <svg width="12" height="14" viewBox="0 0 12 14" fill="none" stroke="#8f8c84" strokeWidth="2">
              <path d="M9 1.500 3.500 7 9 12.500" />
            </svg>
          </button>
          <button type="button" aria-label="Forward" className="flex flex-1 items-center justify-center">
            <svg width="12" height="14" viewBox="0 0 12 14" fill="none" stroke="#8f8c84" strokeWidth="2">
              <path d="M3 1.500 8.500 7 3 12.500" />
            </svg>
          </button>
        </div>
        <div className={toolGroup}>
          <button type="button" aria-label="Scroll path left" className="flex w-[22px] items-center justify-center pr-1">
            <svg width="6" height="10" viewBox="0 0 6 10">
              <path d="M6 0v10L.5 5Z" fill="#8f8c84" />
            </svg>
          </button>
          <button
            type="button"
            className="flex items-center gap-1.5 border-x border-x-[#5b5952] bg-[#474640] pr-2.5 pl-[7px] text-sm font-bold"
          >
            <svg width="16" height="16" viewBox="0 0 16 16" aria-hidden="true">
              {homeIcon}
            </svg>
            Home
          </button>
          <button type="button" aria-label="Scroll path right" className="flex w-6 items-center justify-center">
            <svg width="6" height="10" viewBox="0 0 6 10">
              <path d="M0 0v10L5.500 5Z" fill="#8f8c84" />
            </svg>
          </button>
        </div>
        <div className="ml-auto flex gap-2">
          <button type="button" aria-label="Search" className={`${toolButton} w-[34px]`}>
            <svg width="16" height="16" viewBox="0 0 16 16" fill="none" stroke="#dfdbd2">
              <circle cx="6.500" cy="6.500" r="4.500" strokeWidth="2" />
              <path d="m9.700 9.700 5 5" strokeWidth="2.400" />
            </svg>
          </button>
          <button type="button" aria-label="View" className={`${toolButton} w-[34px]`}>
            <svg width="16" height="16" viewBox="0 0 16 16" fill="#dfdbd2">
              <path d="M3 3h4v4H3ZM9 3h4v4H9ZM3 9h4v4H3ZM9 9h4v4H9Z" />
            </svg>
          </button>
          <button type="button" aria-label="Menu" className={`${toolButton} w-[34px]`}>
            <svg width="16" height="16" viewBox="0 0 16 16" fill="#dfdbd2">
              <path d="M3 3h10v2H3ZM3 7h10v2H3ZM3 11h10v2H3Z" />
            </svg>
          </button>
        </div>
      </div>
    </div>
  );
}

function FilesWindow() {
  return (
    <section
      aria-label="Home"
      className="absolute top-[85px] right-[172px] bottom-[81px] left-[233px] flex flex-col rounded-t-[5px] bg-[#f2f1f0] shadow-[0_1px_5px_rgba(0,0,0,0.7)]"
    >
      <WindowHeader />
      <div className="flex min-h-0 flex-1">
        <nav
          aria-label="Places"
          className="w-[190px] shrink-0 border-r-[3px] border-l border-r-[#cbcac8] border-l-[#d6d5d3] bg-[#e6e5e3] pt-[5px] text-[15px] text-[#4f4f4f]"
        >
          <ul>
            {places.map((place) => (
              <Place key={place.name} name={place.name} icon={place.icon} active={place.name === "Home"} />
            ))}
          </ul>
          <div className="my-1 h-[3px] border-y border-[#c6c5c3]" />
          <ul>
            <Place
              name="Other Locations"
              icon={<path d="M8 3v10M3 8h10" stroke="currentColor" strokeWidth="2" />}
            />
          </ul>
        </nav>
        <ul className="flex flex-1 flex-wrap content-start pt-3 pr-10 pl-1 text-[15px] leading-5 text-[#3c3c3c]">
          {folders.map((folder) => (
            <li key={folder.name} className="h-[74px] w-[93px]">
              <a href="#" className="flex flex-col items-center">
                {folder.art}
                {folder.name}
              </a>
            </li>
          ))}
        </ul>
      </div>
    </section>
  );
}

/* Desktop ----------------------------------------------------------------------- */

function DesktopIcons() {
  return (
    <ul className="flex w-[133px] flex-col gap-[22px] pt-[25px] text-[15px] leading-[17px] text-white [text-shadow:1px_1px_1px_rgba(0,0,0,0.9)]">
      <li>
        <a href="#" className="flex flex-col items-center gap-[3px]">
          <Folder>
            <path
              d="M35 27h10.500V38.500l-3.500-3.500c-2 3-5 5-8.500 5l-4-2c4-1 7-3 8.500-6.500Z"
              fill="#2a2521"
              stroke="#f6f0ea"
              strokeWidth="1.100"
            />
          </Folder>
          Examples
        </a>
      </li>
      <li>
        <a href="#" className="flex flex-col items-center gap-0.5 text-center">
          <InstallArt size={48} />
          <span className="w-[70px]">Install Ubuntu 16.10</span>
        </a>
      </li>
    </ul>
  );
}

export default function App() {
  return (
    <div className="relative flex min-h-screen flex-col overflow-hidden font-['Noto_Sans','Open_Sans',sans-serif]">
      <Wallpaper />
      <TopPanel />
      <div className="relative flex flex-1">
        <Launcher />
        <main className="relative flex-1">
          <DesktopIcons />
          <FilesWindow />
        </main>
      </div>
    </div>
  );
}
